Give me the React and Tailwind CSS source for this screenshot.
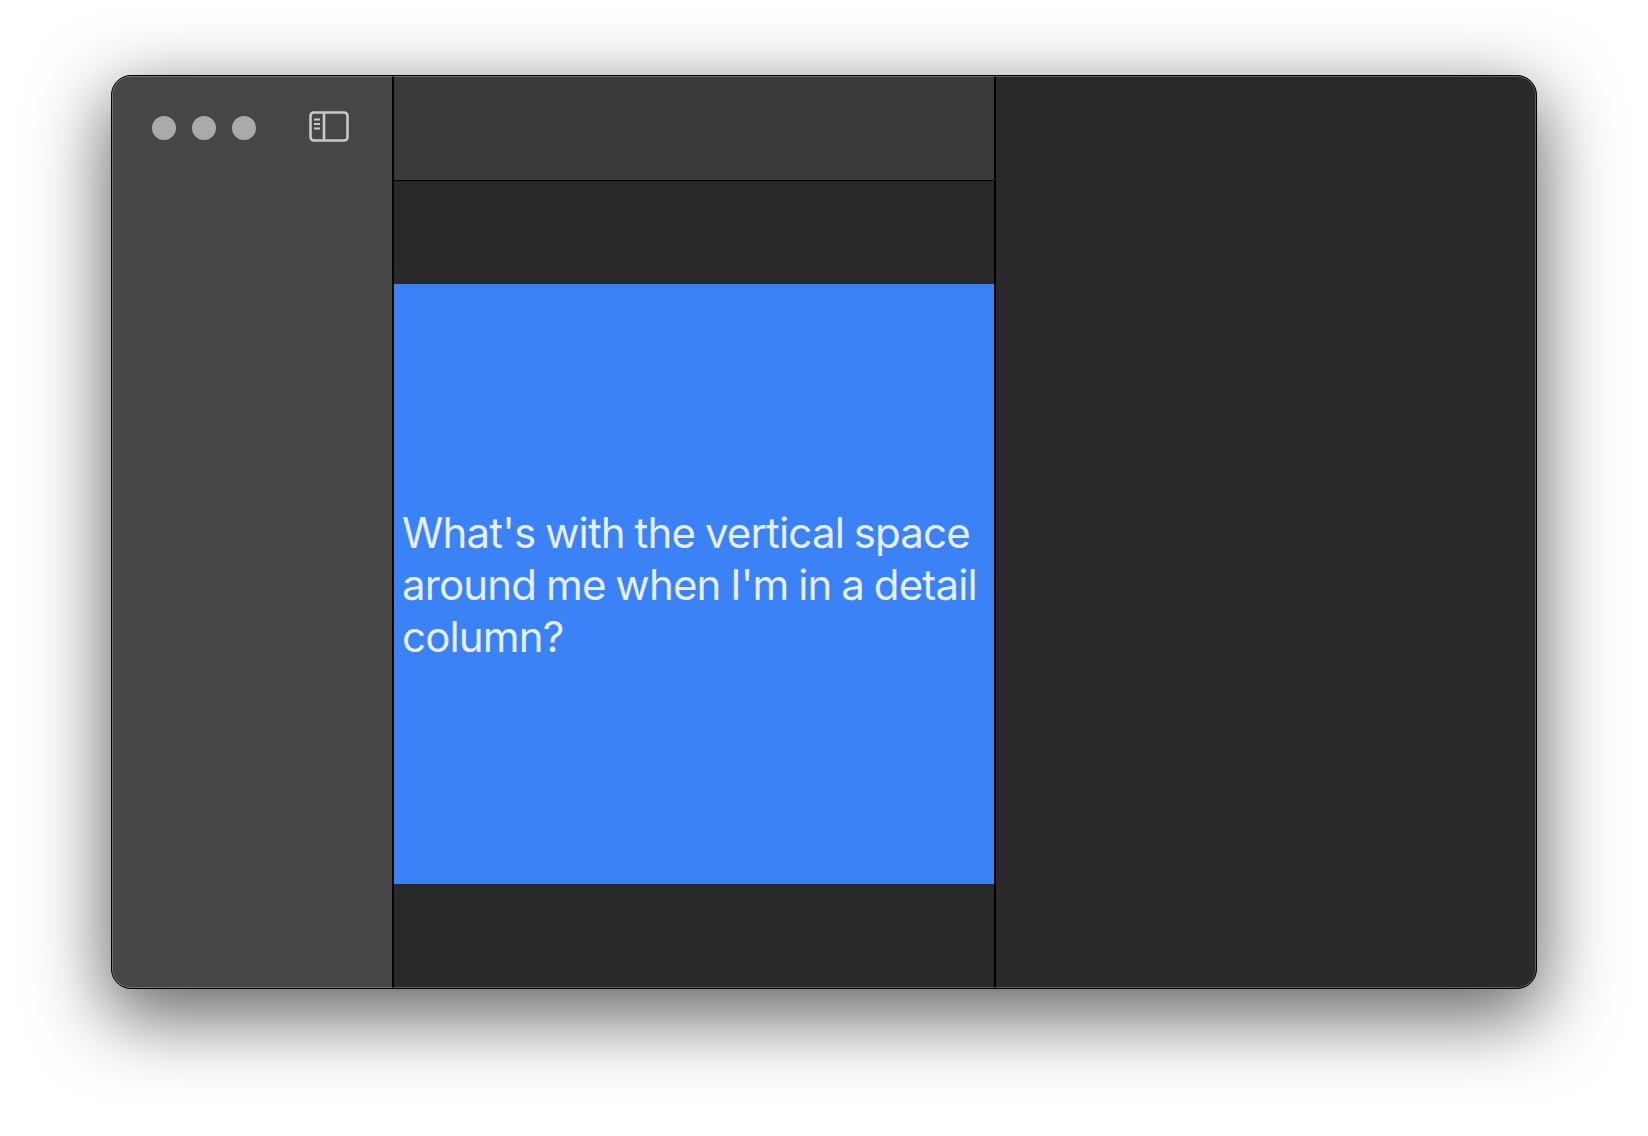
const DOTS = [0, 1, 2];

function SidebarIcon() {
  return (
    <svg width="40" height="32" viewBox="0 0 40 32" fill="none" stroke="#c9c9c9" strokeWidth="2.6">
      <rect x="1.5" y="1.5" width="37" height="28" rx="3.5" />
      <path d="M15 1.5v28" />
      <path d="M5 8.5h6M5 13h6M5 17.5h6" strokeWidth="1.8" />
    </svg>
  );
}

export default function App() {
  return (
    <div className="h-[1136px] w-full overflow-hidden bg-white pl-[111px] pt-[75px] font-['Inter',sans-serif]">
      <div className="relative flex h-[914px] w-[1426px] overflow-hidden rounded-[20px] border border-black bg-[#292929] shadow-[0_24px_74px_5px_rgba(0,0,0,0.6)]">
        <aside className="flex w-[282px] shrink-0 items-start gap-[53px] border-r-2 border-black bg-[#464646] pl-[40px] pt-[35px]">
          <div className="flex gap-4 pt-[5px]">
            {DOTS.map((dot) => (
              <span key={dot} className="size-6 rounded-full bg-[#aaaaaa]" />
            ))}
          </div>
          <SidebarIcon />
        </aside>
        <main className="flex w-[602px] shrink-0 flex-col border-r-2 border-black">
          <div className="h-[105px] shrink-0 border-b border-black bg-[#3a3a3a]" />
          <div className="flex flex-1 items-center pb-[2px]">
            <div className="flex h-[600px] w-[600px] items-center bg-[#3b82f6] p-2">
              <p className="mt-[2px] text-[42px] leading-[52px] tracking-[-0.02em] text-[#e6efff] [word-spacing:-1.2px]">
                What's with the vertical space around me when I'm in a detail column?
              </p>
            </div>
          </div>
        </main>
        <div className="flex-1" />
        {/* window highlight sits over the dividers */}
        <div className="pointer-events-none absolute inset-0 rounded-[19px] border border-white/25" />
      </div>
    </div>
  );
}
